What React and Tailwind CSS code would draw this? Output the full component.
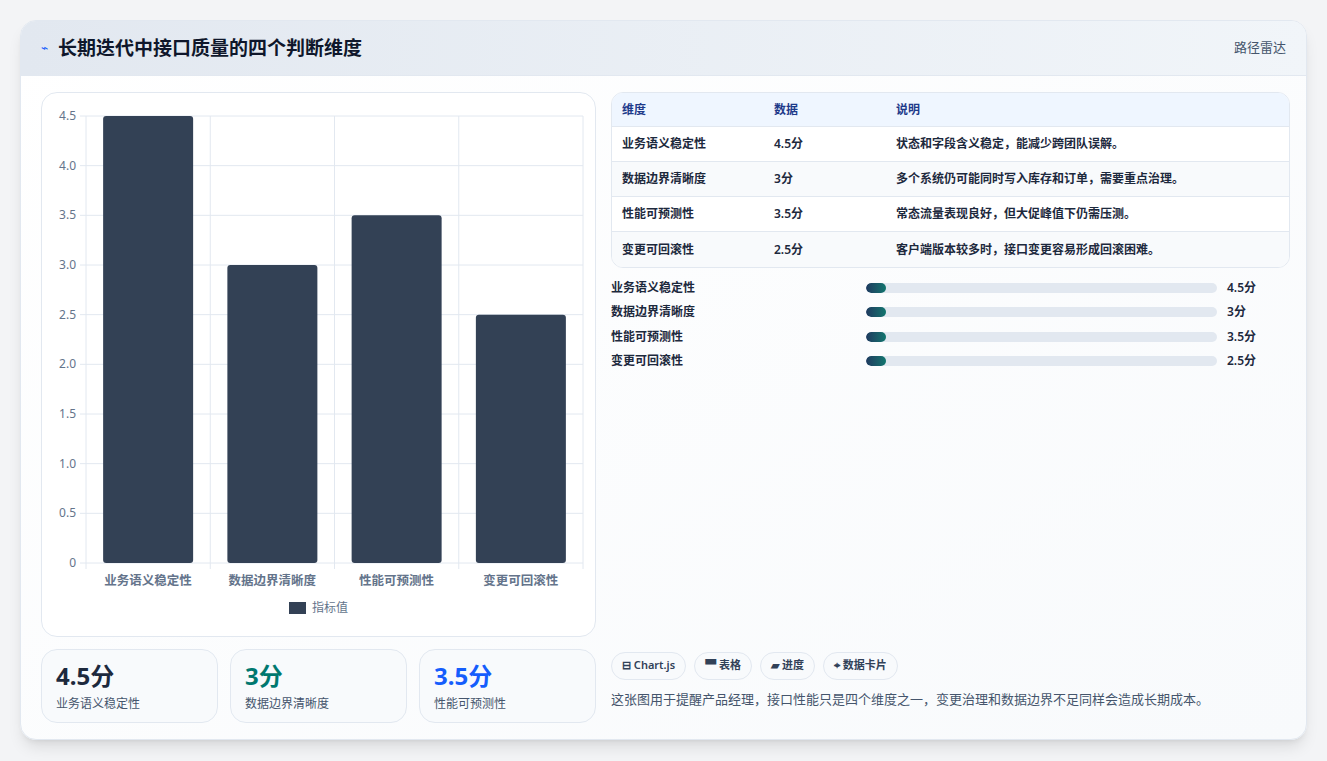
const rows = [
  { name: "业务语义稳定性", value: 4.5, note: "状态和字段含义稳定，能减少跨团队误解。" },
  { name: "数据边界清晰度", value: 3, note: "多个系统仍可能同时写入库存和订单，需要重点治理。" },
  { name: "性能可预测性", value: 3.5, note: "常态流量表现良好，但大促峰值下仍需压测。" },
  { name: "变更可回滚性", value: 2.5, note: "客户端版本较多时，接口变更容易形成回滚困难。" },
];

const font = { fontFamily: '"Noto Sans", "Noto Sans CJK SC", sans-serif' };

function Chart() {
  const left = 44, right = 541, top = 23, bottom = 470;
  const h = bottom - top;
  const cw = (right - left) / 4;
  const ticks = [0, 0.5, 1, 1.5, 2, 2.5, 3, 3.5, 4, 4.5];
  return (
    <svg width="554" height="544" className="block">
      {ticks.map((t) => {
        const y = bottom - (t / 4.5) * h;
        return (
          <g key={t}>
            <line x1={left - 6} x2={right} y1={y} y2={y} stroke="#e2e8f0" />
            <text x={left - 10} y={y + 4} textAnchor="end" fontSize="12" fill="#64748b">
              {t === 0 ? "0" : t.toFixed(1)}
            </text>
          </g>
        );
      })}
      {[0, 1, 2, 3, 4].map((i) => (
        <line key={i} x1={left + i * cw} x2={left + i * cw} y1={top} y2={bottom + 6} stroke="#e2e8f0" />
      ))}
      {rows.map((r, i) => {
        const bh = (r.value / 4.5) * h;
        const cx = left + i * cw + cw / 2;
        return (
          <g key={r.name}>
            <rect x={cx - 45} y={bottom - bh} width="90" height={bh} rx="3" fill="#334155" />
            <text x={cx} y={492} textAnchor="middle" fontSize="12.5" fontWeight="600" fill="#64748b">
              {r.name}
            </text>
          </g>
        );
      })}
      <rect x="247" y="509" width="17" height="12" fill="#334155" />
      <text x="270" y="519" fontSize="12" fill="#64748b">指标值</text>
    </svg>
  );
}

export default function App() {
  return (
    <div className="min-h-screen bg-[#f3f4f6] p-5" style={font}>
      <div className="h-[720px] rounded-2xl border border-slate-200 bg-gradient-to-br from-white to-[#f8fafc] shadow-lg overflow-hidden flex flex-col">
        <div className="h-[55px] shrink-0 flex items-center justify-between px-5 bg-gradient-to-r from-[#e2e8f0] to-[#f1f5f9] border-b border-slate-200">
          <div className="flex items-center gap-2.5">
            <span className="text-blue-600 text-xs">⌁</span>
            <h1 className="text-[19px] font-bold text-slate-900">长期迭代中接口质量的四个判断维度</h1>
          </div>
          <span className="text-[13px] text-slate-600">路径雷达</span>
        </div>
        <div className="flex gap-[15px] px-5 pt-4">
          <div className="w-[555px] shrink-0 flex flex-col gap-3">
            <div className="h-[545px] rounded-2xl border border-slate-200 bg-white">
              <Chart />
            </div>
            <div className="grid grid-cols-3 gap-3">
              {[
                ["4.5分", "业务语义稳定性", "text-slate-800"],
                ["3分", "数据边界清晰度", "text-teal-700"],
                ["3.5分", "性能可预测性", "text-blue-600"],
              ].map(([v, l, c]) => (
                <div key={l} className="h-[74px] rounded-2xl border border-slate-200 bg-[#f8fafc] px-3.5 pt-2.5">
                  <div className={`text-2xl font-bold leading-8 ${c}`}>{v}</div>
                  <div className="text-xs text-slate-600 mt-1">{l}</div>
                </div>
              ))}
            </div>
          </div>
          <div className="flex-1 flex flex-col pr-[0px] mr-[0px]">
            <div className="w-[679px] rounded-xl border border-slate-200 overflow-hidden bg-white text-xs font-semibold text-slate-800">
              <div className="flex h-[34px] items-center bg-[#eff6ff] border-b border-slate-200 text-[#1e3a8a]">
                <div className="w-[162px] pl-2.5">维度</div>
                <div className="w-[122px]">数据</div>
                <div>说明</div>
              </div>
              {rows.map((r, i) => (
                <div key={r.name} className={`flex h-[35px] items-center ${i < 3 ? "border-b border-slate-200" : ""} ${i % 2 ? "bg-[#f8fafc]" : "bg-white"}`}>
                  <div className="w-[162px] pl-2.5">{r.name}</div>
                  <div className="w-[122px]">{r.value}分</div>
                  <div>{r.note}</div>
                </div>
              ))}
            </div>
            <div className="flex flex-col mt-[11px] gap-[7px] w-[679px]">
              {rows.map((r) => (
                <div key={r.name} className="flex items-center h-[17.5px] text-xs font-semibold text-slate-800">
                  <div className="w-[255px]">{r.name}</div>
                  <div className="w-[351px] h-[10px] rounded-full bg-slate-200 overflow-hidden">
                    <div className="w-[20px] h-full rounded-full bg-gradient-to-r from-[#1e3a5f] to-[#0f766e]" />
                  </div>
                  <div className="ml-2.5">{r.value}分</div>
                </div>
              ))}
            </div>
            <div className="mt-auto flex gap-2 mb-[10px] text-[11px] font-semibold text-slate-700">
              {["⊟ Chart.js", "▀ 表格", "▰ 进度", "⌖ 数据卡片"].map((c) => (
                <span key={c} className="h-[28px] px-2.5 flex items-center rounded-full border border-slate-200 bg-[#f8fafc]">{c}</span>
              ))}
            </div>
            <p className="text-[13px] text-slate-600 mb-[14px]">这张图用于提醒产品经理，接口性能只是四个维度之一，变更治理和数据边界不足同样会造成长期成本。</p>
          </div>
        </div>
      </div>
    </div>
  );
}
